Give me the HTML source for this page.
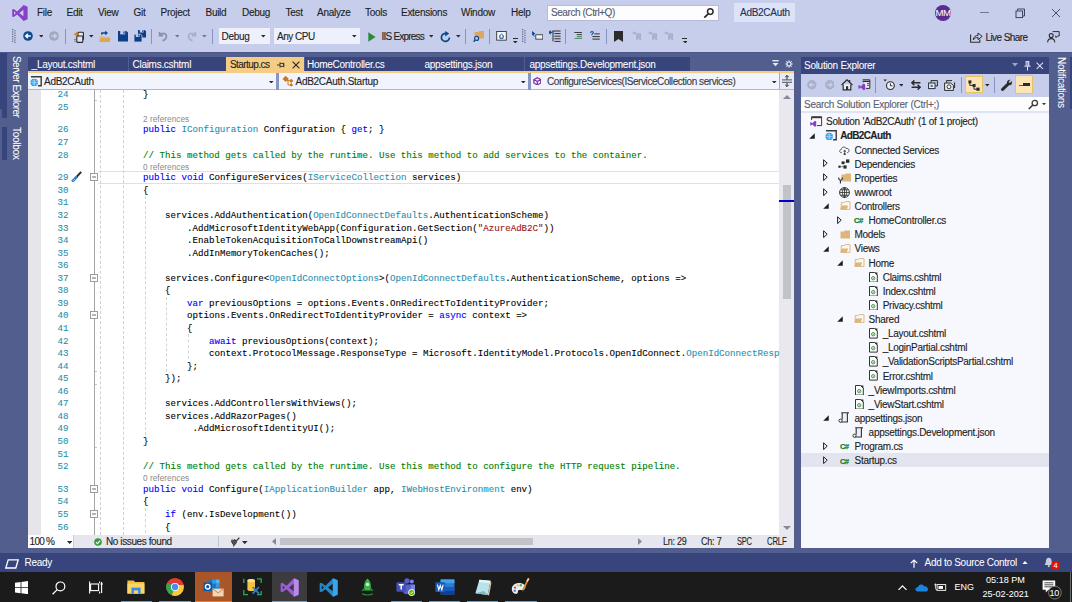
<!DOCTYPE html>
<html><head><meta charset="utf-8"><title>AdB2CAuth - Microsoft Visual Studio</title>
<style>
html,body{margin:0;padding:0;background:#525e8e;}
#root{position:relative;width:1072px;height:602px;overflow:hidden;background:#525e8e;font-family:"Liberation Sans",sans-serif;font-size:9.42px;color:#1e1e1e;}
#root div,#root span,#root svg{position:absolute;}
#root span{white-space:pre;line-height:12px;-webkit-text-stroke:0.12px currentColor;}
#root .m{font-family:"Liberation Mono",monospace;font-size:9.157px;-webkit-text-stroke:0.1px currentColor;}
.k{color:#0000ff}.t{color:#2b91af}.c{color:#008000}.s{color:#a31515}
#root span span{position:static;}
</style></head><body><div id="root">

<div style="left:0px;top:0px;width:1072px;height:51.5px;background:#c6ceeb;"></div>
<svg style="left:11px;top:4px" width="18" height="18" viewBox="0 0 18 18"><path d="M1.2 5.6 L2.6 4.9 L6.2 7.6 L12.6 1 L16.6 2.7 V15.3 L12.6 17 L6.2 10.4 L2.6 13.1 L1.2 12.4 Z M3 7.2 V10.8 L4.9 9 Z M12.4 5.8 L8.3 9 L12.4 12.2 Z" fill="#8a3fc8" fill-rule="evenodd"/></svg>
<span style="left:37px;top:7.20px;color:#1e1e1e;font-size:10.0px;letter-spacing:-0.280px;">File</span>
<span style="left:66.5px;top:7.20px;color:#1e1e1e;font-size:10.0px;letter-spacing:-0.280px;">Edit</span>
<span style="left:98px;top:7.20px;color:#1e1e1e;font-size:10.0px;letter-spacing:-0.280px;">View</span>
<span style="left:133.5px;top:7.20px;color:#1e1e1e;font-size:10.0px;letter-spacing:-0.280px;">Git</span>
<span style="left:160.5px;top:7.20px;color:#1e1e1e;font-size:10.0px;letter-spacing:-0.280px;">Project</span>
<span style="left:205.5px;top:7.20px;color:#1e1e1e;font-size:10.0px;letter-spacing:-0.280px;">Build</span>
<span style="left:242px;top:7.20px;color:#1e1e1e;font-size:10.0px;letter-spacing:-0.280px;">Debug</span>
<span style="left:285.5px;top:7.20px;color:#1e1e1e;font-size:10.0px;letter-spacing:-0.280px;">Test</span>
<span style="left:317px;top:7.20px;color:#1e1e1e;font-size:10.0px;letter-spacing:-0.280px;">Analyze</span>
<span style="left:365px;top:7.20px;color:#1e1e1e;font-size:10.0px;letter-spacing:-0.280px;">Tools</span>
<span style="left:401px;top:7.20px;color:#1e1e1e;font-size:10.0px;letter-spacing:-0.280px;">Extensions</span>
<span style="left:461px;top:7.20px;color:#1e1e1e;font-size:10.0px;letter-spacing:-0.280px;">Window</span>
<span style="left:511px;top:7.20px;color:#1e1e1e;font-size:10.0px;letter-spacing:-0.280px;">Help</span>
<div style="left:547.3px;top:4.6px;width:172px;height:16px;background:#fdfdff;border:1px solid #b4bcd8;box-sizing:border-box;"></div>
<span style="left:551px;top:7.40px;color:#555b70;font-size:10.0px;letter-spacing:-0.430px;">Search (Ctrl+Q)</span>
<svg style="left:703px;top:7px" width="12" height="12" viewBox="0 0 12 12"><circle cx="7.3" cy="4.6" r="2.8" fill="none" stroke="#2b2b2b" stroke-width="1.5"/><path d="M5.2 6.8 L1.3 10.7" stroke="#2b2b2b" stroke-width="1.8"/></svg>
<div style="left:734px;top:3px;width:61px;height:19px;background:#dde3f7;"></div>
<span style="left:740px;top:7.40px;color:#23305c;font-size:10.0px;letter-spacing:-0.280px;">AdB2CAuth</span>
<div style="left:935px;top:4.5px;width:16px;height:16px;border-radius:8px;background:#5c2d91;overflow:hidden"></div>
<span style="left:935.6px;top:7.00px;color:#ffffff;font-size:9.6px;letter-spacing:-0.700px;-webkit-text-stroke:0.03px #fff;">MM</span>
<div style="left:979.7px;top:12.3px;width:9px;height:1px;background:#6f7796;"></div>
<svg style="left:1015.3px;top:7.5px" width="11" height="11" viewBox="0 0 11 11"><path d="M2.5 2.5 V1 H9.5 V8 H8" fill="none" stroke="#3b4263" stroke-width="1"/><rect x="1" y="3" width="6.6" height="6.6" fill="none" stroke="#3b4263" stroke-width="1"/></svg>
<svg style="left:1051px;top:8px" width="10" height="10" viewBox="0 0 10 10"><path d="M1 1 L9 9 M9 1 L1 9" stroke="#4a5172" stroke-width="1"/></svg>
<svg style="left:12px;top:28.8px" width="4.6" height="14" viewBox="0 0 4.6 14"><rect x="0.0" y="0.00" width="1.3" height="1.2" fill="#5f6887"/><rect x="2.3" y="1.16" width="1.3" height="1.2" fill="#5f6887"/><rect x="0.0" y="2.32" width="1.3" height="1.2" fill="#5f6887"/><rect x="2.3" y="3.48" width="1.3" height="1.2" fill="#5f6887"/><rect x="0.0" y="4.64" width="1.3" height="1.2" fill="#5f6887"/><rect x="2.3" y="5.80" width="1.3" height="1.2" fill="#5f6887"/><rect x="0.0" y="6.96" width="1.3" height="1.2" fill="#5f6887"/><rect x="2.3" y="8.12" width="1.3" height="1.2" fill="#5f6887"/><rect x="0.0" y="9.28" width="1.3" height="1.2" fill="#5f6887"/><rect x="2.3" y="10.44" width="1.3" height="1.2" fill="#5f6887"/><rect x="0.0" y="11.60" width="1.3" height="1.2" fill="#5f6887"/><rect x="2.3" y="12.76" width="1.3" height="1.2" fill="#5f6887"/></svg>
<svg style="left:22.5px;top:31.299999999999997px" width="10" height="10" viewBox="0 0 10 10"><circle cx="5" cy="5" r="4.8" fill="#0b4a8f"/><path d="M7.8 5 H3 M4.9 2.9 L2.7 5 L4.9 7.1" stroke="#fff" stroke-width="1.5" fill="none"/></svg>
<svg style="left:38.6px;top:35.3px" width="4.6" height="2.60" viewBox="0 0 4.6 2.6"><path d="M0 0 H4.6 L2.3 2.6 Z" fill="#2b2b2b"/></svg>
<svg style="left:49.3px;top:31.299999999999997px" width="10" height="10" viewBox="0 0 10 10"><circle cx="5" cy="5" r="4.8" fill="#a3a8bd"/><path d="M2.2 5 H7 M5.1 2.9 L7.3 5 L5.1 7.1" stroke="#c6ceeb" stroke-width="1.5" fill="none"/></svg>
<div style="left:65px;top:28.5px;width:1px;height:15.5px;background:#8593c2;"></div>
<svg style="left:72.5px;top:30.5px" width="12" height="12" viewBox="0 0 12 12"><rect x="5" y="1.2" width="5.4" height="7.6" rx="0.8" fill="#e6e8f6" stroke="#2b2b2b" stroke-width="1.1"/><rect x="3.8" y="5" width="6" height="6.4" rx="0.6" fill="#dfe2f3" stroke="#2b2b2b" stroke-width="1.1"/><path d="M2 8 V11" stroke="#2b2b2b" stroke-width="0.9" stroke-dasharray="1 0.7"/><path d="M3.2 0.2 L4 2.4 L6.2 3.2 L4 4 L3.2 6.2 L2.4 4 L0.2 3.2 L2.4 2.4 Z" fill="#d4801f"/></svg>
<svg style="left:89.3px;top:35.3px" width="4.6" height="2.60" viewBox="0 0 4.6 2.6"><path d="M0 0 H4.6 L2.3 2.6 Z" fill="#2b2b2b"/></svg>
<svg style="left:99px;top:30.5px" width="12" height="12" viewBox="0 0 12 12"><path d="M0.5 5.2 H4.3 L5.2 6.1 H10.6 V11 H0.5 Z" fill="#e7b566"/><path d="M1.3 7.2 H11.6 L10.4 11 H0.5 Z" fill="#dfa650"/><path d="M2.8 3.8 V2 H7.6 M6.2 0.4 L8 2 L6.2 3.6" fill="none" stroke="#0b4a8f" stroke-width="1.3"/></svg>
<svg style="left:117.6px;top:31px" width="10" height="10.5" viewBox="0 0 10 10.5"><path d="M0 0 H8.2 L10 1.6 V10.5 H0 Z" fill="#0b3f86"/><rect x="2.2" y="0" width="5" height="3.4" fill="#c6ceeb"/><rect x="5.4" y="0.5" width="1.2" height="2.2" fill="#0b3f86"/></svg>
<svg style="left:134px;top:30px" width="12" height="12" viewBox="0 0 12 12"><path d="M4 0 H10.6 L12 1.3 V7.6 H4 Z" fill="#0b3f86"/><rect x="5.8" y="0" width="3.8" height="2.5" fill="#c6ceeb"/><rect x="8.2" y="0.4" width="0.9" height="1.6" fill="#0b3f86"/><path d="M0 4.2 H6.6 L8 5.5 V12 H0 Z" fill="#0b3f86" stroke="#c6ceeb" stroke-width="0.8"/><rect x="1.8" y="4.4" width="3.8" height="2.5" fill="#c6ceeb"/><rect x="4.2" y="4.8" width="0.9" height="1.6" fill="#0b3f86"/></svg>
<div style="left:151px;top:28.5px;width:1px;height:15.5px;background:#8593c2;"></div>
<svg style="left:158px;top:30.5px" width="11" height="11" viewBox="0 0 11 11"><path d="M1.6 1 V4.6 H5.2 M1.8 4.4 C3.4 1.8 7 1.6 8.2 4 C9.2 6.2 7.6 8.6 4.6 9.8" fill="none" stroke="#8a91ae" stroke-width="1.7"/></svg>
<svg style="left:174.7px;top:35.3px" width="4.6" height="2.60" viewBox="0 0 4.6 2.6"><path d="M0 0 H4.6 L2.3 2.6 Z" fill="#6e7593"/></svg>
<svg style="left:185.5px;top:30.5px" width="11" height="11" viewBox="0 0 11 11"><path d="M9.4 1 V4.6 H5.8 M9.2 4.4 C7.6 1.8 4 1.6 2.8 4 C1.8 6.2 3.4 8.6 6.4 9.8" fill="none" stroke="#a9afc9" stroke-width="1.7"/></svg>
<svg style="left:202px;top:35.3px" width="4.6" height="2.60" viewBox="0 0 4.6 2.6"><path d="M0 0 H4.6 L2.3 2.6 Z" fill="#6e7593"/></svg>
<div style="left:212px;top:28.5px;width:1px;height:15.5px;background:#8593c2;"></div>
<div style="left:218.5px;top:28px;width:51px;height:16px;background:#eef1fc;"></div>
<span style="left:221.5px;top:30.70px;color:#1e1e1e;font-size:10.0px;letter-spacing:-0.280px;">Debug</span>
<svg style="left:261.2px;top:35.3px" width="4.6" height="2.60" viewBox="0 0 4.6 2.6"><path d="M0 0 H4.6 L2.3 2.6 Z" fill="#2b2b2b"/></svg>
<div style="left:274px;top:28px;width:86px;height:16px;background:#eef1fc;"></div>
<span style="left:277px;top:30.70px;color:#1e1e1e;font-size:10.0px;letter-spacing:-0.480px;">Any CPU</span>
<svg style="left:352.3px;top:35.3px" width="4.6" height="2.60" viewBox="0 0 4.6 2.6"><path d="M0 0 H4.6 L2.3 2.6 Z" fill="#2b2b2b"/></svg>
<svg style="left:368px;top:31.5px" width="8" height="10" viewBox="0 0 8 10"><path d="M0.3 0.3 L7.6 5 L0.3 9.7 Z" fill="#2e8a36"/></svg>
<span style="left:381.5px;top:30.70px;color:#1e1e1e;font-size:10.0px;letter-spacing:-0.780px;">IIS Express</span>
<svg style="left:428.5px;top:35.3px" width="4.6" height="2.60" viewBox="0 0 4.6 2.6"><path d="M0 0 H4.6 L2.3 2.6 Z" fill="#2b2b2b"/></svg>
<svg style="left:439.5px;top:30.5px" width="11" height="12" viewBox="0 0 11 12"><path d="M6.6 2.6 A4 4 0 1 0 9.4 6.4" fill="none" stroke="#0b4a8f" stroke-width="1.7"/><path d="M5.2 0 L9.2 2.6 L5.2 5.4 Z" fill="#0b4a8f"/></svg>
<svg style="left:456px;top:35.3px" width="4.6" height="2.60" viewBox="0 0 4.6 2.6"><path d="M0 0 H4.6 L2.3 2.6 Z" fill="#2b2b2b"/></svg>
<div style="left:464.7px;top:28.5px;width:1px;height:15.5px;background:#8593c2;"></div>
<svg style="left:472.5px;top:30px" width="13" height="12" viewBox="0 0 13 12"><path d="M1.6 2 H5.6 L6.4 1 H11 V8.6 H1.6 Z" fill="#dba864"/><circle cx="3.6" cy="8.4" r="2" fill="#c6ceeb" stroke="#0b4a8f" stroke-width="1.2"/><path d="M2.2 10 L0.6 11.8" stroke="#0b4a8f" stroke-width="1.4"/></svg>
<div style="left:488.7px;top:28.5px;width:1px;height:15.5px;background:#8593c2;"></div>
<svg style="left:496px;top:31.2px" width="11" height="9.6" viewBox="0 0 12 11"><rect x="0.5" y="0.5" width="11" height="10" fill="#f4f6fd" stroke="#2f2f2f" stroke-width="1"/><path d="M3.2 6.2 L6 3.6 L8.8 6.2 M4.2 5.8 V8.4 H7.8 V5.8" fill="none" stroke="#0b4a8f" stroke-width="1.1"/></svg>
<div style="left:513px;top:38px;width:5px;height:1.2px;background:#2b2b2b;"></div>
<svg style="left:513.2px;top:40.599999999999994px" width="4.6" height="2.60" viewBox="0 0 4.6 2.6"><path d="M0 0 H4.6 L2.3 2.6 Z" fill="#2b2b2b"/></svg>
<svg style="left:521.8px;top:28.8px" width="4.6" height="14" viewBox="0 0 4.6 14"><rect x="0.0" y="0.00" width="1.3" height="1.2" fill="#5f6887"/><rect x="2.3" y="1.16" width="1.3" height="1.2" fill="#5f6887"/><rect x="0.0" y="2.32" width="1.3" height="1.2" fill="#5f6887"/><rect x="2.3" y="3.48" width="1.3" height="1.2" fill="#5f6887"/><rect x="0.0" y="4.64" width="1.3" height="1.2" fill="#5f6887"/><rect x="2.3" y="5.80" width="1.3" height="1.2" fill="#5f6887"/><rect x="0.0" y="6.96" width="1.3" height="1.2" fill="#5f6887"/><rect x="2.3" y="8.12" width="1.3" height="1.2" fill="#5f6887"/><rect x="0.0" y="9.28" width="1.3" height="1.2" fill="#5f6887"/><rect x="2.3" y="10.44" width="1.3" height="1.2" fill="#5f6887"/><rect x="0.0" y="11.60" width="1.3" height="1.2" fill="#5f6887"/><rect x="2.3" y="12.76" width="1.3" height="1.2" fill="#5f6887"/></svg>
<svg style="left:531.5px;top:30.5px" width="11.5" height="10.6" viewBox="0 0 14 13"><path d="M0 0 L4.2 3.4 L2.2 4 L3.4 6.4 L2.4 6.9 L1.2 4.6 L0 5.8 Z" fill="#0b4a8f"/><rect x="4.6" y="4.6" width="8.6" height="5.4" fill="#eef1fc" stroke="#2f2f2f" stroke-width="1"/></svg>
<svg style="left:549px;top:30px" width="13" height="12" viewBox="0 0 13 12"><path d="M0 2.4 H3.4 M1.8 0.6 L0 2.4 L1.8 4.2" fill="none" stroke="#0b4a8f" stroke-width="1.1"/><path d="M3.4 1 H11.6 M5.4 3.6 H11.6 M5.4 6.2 H11.6 M5.4 8.8 H11.6 M5.4 11.4 H11.6 M4 1 V11.4" fill="none" stroke="#2f2f2f" stroke-width="1"/></svg>
<div style="left:565px;top:28.5px;width:1px;height:15.5px;background:#8593c2;"></div>
<svg style="left:573.6px;top:32px" width="8.8" height="7.4" viewBox="0 0 10 9"><path d="M0 0.6 H9.6 M3 3.2 H9.6" stroke="#2f2f2f" stroke-width="1.1"/><path d="M3 5.8 H9.6 M0 8.2 H9.6" stroke="#2e7d32" stroke-width="1.1"/></svg>
<svg style="left:589.6px;top:31px" width="10.4" height="9" viewBox="0 0 11 10"><path d="M0.4 2.2 C0.6 0.2 3.4 0.2 3.4 1.8 C3.4 3 1.6 3 1.8 4.6" fill="none" stroke="#0b4a8f" stroke-width="1.2"/><path d="M4.6 3.2 H10.6 M2.4 6.2 H10.6 M2.4 9 H10.6" stroke="#2f2f2f" stroke-width="1.1"/></svg>
<div style="left:606px;top:28.5px;width:1px;height:15.5px;background:#8593c2;"></div>
<svg style="left:613.5px;top:30.5px" width="9" height="11" viewBox="0 0 9 11"><path d="M0 0 H9 V11 L4.5 8 L0 11 Z" fill="#2b2b2b"/></svg>
<svg style="left:632px;top:30.8px" width="10" height="10" viewBox="0 0 11 11"><path d="M4.5 2.6 H10 V10.6 L7.2 8.6 L4.5 10.6 Z" fill="#aab1cd"/><path d="M0.4 2.2 H4 M2.4 0.6 L4 2.2 L2.4 3.8" fill="none" stroke="#9aa2c0" stroke-width="1"/></svg>
<svg style="left:648px;top:30.8px" width="10" height="10" viewBox="0 0 11 11"><path d="M4.5 2.6 H10 V10.6 L7.2 8.6 L4.5 10.6 Z" fill="#aab1cd"/><path d="M0.4 2.2 H4 M2.4 0.6 L4 2.2 L2.4 3.8" fill="none" stroke="#9aa2c0" stroke-width="1"/></svg>
<svg style="left:664.4px;top:30.8px" width="10" height="10" viewBox="0 0 11 11"><path d="M4.5 2.6 H10 V10.6 L7.2 8.6 L4.5 10.6 Z" fill="#aab1cd"/><path d="M0.4 2.2 H4 M2.4 0.6 L4 2.2 L2.4 3.8" fill="none" stroke="#9aa2c0" stroke-width="1"/></svg>
<div style="left:682.4px;top:38px;width:5px;height:1.2px;background:#2b2b2b;"></div>
<svg style="left:682.6px;top:40.599999999999994px" width="4.6" height="2.60" viewBox="0 0 4.6 2.6"><path d="M0 0 H4.6 L2.3 2.6 Z" fill="#2b2b2b"/></svg>
<svg style="left:970px;top:31px" width="13" height="12" viewBox="0 0 13 12"><path d="M0.6 3.6 V11.2 H9.8 V8.4" fill="none" stroke="#2f2f2f" stroke-width="1.1"/><path d="M3.2 9 C3.6 5.6 5.6 4.4 8 4.4 V2 L12.2 5.4 L8 8.6 V6.4 C6 6.4 4.6 7 3.2 9 Z" fill="#c6ceeb" stroke="#2f2f2f" stroke-width="1"/></svg>
<span style="left:985.5px;top:32.10px;color:#1e1e1e;font-size:10.0px;letter-spacing:-0.580px;">Live Share</span>
<svg style="left:1047px;top:30.5px" width="13" height="12" viewBox="0 0 13 12"><path d="M5.6 0.6 H12.2 V5 H10.4 L9 6.6 V5 H8.2" fill="none" stroke="#2f2f2f" stroke-width="1"/><circle cx="4.2" cy="4.6" r="2" fill="none" stroke="#2f2f2f" stroke-width="1.1"/><path d="M0.6 11.4 C0.8 8.2 2.4 7.6 4.2 7.6 C6 7.6 7.6 8.2 7.8 11.4" fill="none" stroke="#2f2f2f" stroke-width="1.1"/></svg>
<div style="left:0px;top:51.5px;width:1072px;height:1.2px;background:#4a5788;"></div>
<div style="left:0px;top:52.6px;width:6.7px;height:65.4px;background:#38457d;"></div>
<div style="left:0px;top:109px;width:2.1px;height:9.2px;background:#525e8e;"></div>
<div style="left:2.1px;top:127px;width:4.6px;height:33px;background:#38457d;"></div>
<span style="left:21.6px;top:56.4px;color:#fff;font-size:10.0px;letter-spacing:-0.55px;transform-origin:0 0;transform:rotate(90deg);-webkit-text-stroke:0.05px #fff;">Server Explorer</span>
<span style="left:21.6px;top:127.4px;color:#fff;font-size:10.0px;letter-spacing:-0.28px;transform-origin:0 0;transform:rotate(90deg);-webkit-text-stroke:0.05px #fff;">Toolbox</span>
<div style="left:27.5px;top:57px;width:100.5px;height:14.2px;background:#38457d;"></div>
<span style="left:31.6px;top:58.60px;color:#ffffff;font-size:10.0px;letter-spacing:-0.280px;-webkit-text-stroke:0.05px #fff;">_Layout.cshtml</span>
<div style="left:128.5px;top:57px;width:99px;height:14.2px;background:#38457d;"></div>
<span style="left:132.5px;top:58.60px;color:#ffffff;font-size:10.0px;letter-spacing:-0.280px;-webkit-text-stroke:0.05px #fff;">Claims.cshtml</span>
<div style="left:304.5px;top:57px;width:115px;height:14.2px;background:#38457d;"></div>
<span style="left:307px;top:58.60px;color:#ffffff;font-size:10.0px;letter-spacing:-0.280px;-webkit-text-stroke:0.05px #fff;">HomeController.cs</span>
<div style="left:420px;top:57px;width:104px;height:14.2px;background:#38457d;"></div>
<span style="left:424.5px;top:58.60px;color:#ffffff;font-size:10.0px;letter-spacing:-0.280px;-webkit-text-stroke:0.05px #fff;">appsettings.json</span>
<div style="left:524.5px;top:57px;width:165.5px;height:14.2px;background:#38457d;"></div>
<span style="left:529.5px;top:58.60px;color:#ffffff;font-size:10.0px;letter-spacing:-0.280px;-webkit-text-stroke:0.05px #fff;">appsettings.Development.json</span>
<div style="left:226.2px;top:56.5px;width:77.6px;height:15.5px;background:#f5cc84;"></div>
<span style="left:229.9px;top:58.70px;color:#1e1e1e;font-size:10.0px;letter-spacing:-0.540px;">Startup.cs</span>
<svg style="left:277px;top:61px" width="8" height="8" viewBox="0 0 8 8"><path d="M0 4 H3 M3 1.4 V6.6 M3 2.4 H6.6 V5.4 H3 M6.8 1.8 V6.2" fill="none" stroke="#3a3a3a" stroke-width="1"/></svg>
<svg style="left:291.5px;top:60.5px" width="8" height="8" viewBox="0 0 8 8"><path d="M0.6 0.6 L7.4 7.4 M7.4 0.6 L0.6 7.4" stroke="#2b2b2b" stroke-width="1.2"/></svg>
<svg style="left:772px;top:60.2px" width="7.4" height="7.4" viewBox="0 0 8 8"><path d="M0.4 0.8 H7.2" stroke="#e9ecf8" stroke-width="1.5"/><path d="M0.6 3.2 H7 L3.8 6.8 Z" fill="#e9ecf8"/></svg>
<svg style="left:785.4px;top:59.8px" width="8" height="8" viewBox="0 0 9 9"><circle cx="4.5" cy="4.5" r="2.3" fill="none" stroke="#e9ecf8" stroke-width="1.4"/><path d="M4.5 0.3 V1.6 M4.5 7.4 V8.7 M0.3 4.5 H1.6 M7.4 4.5 H8.7 M1.5 1.5 L2.4 2.4 M6.6 6.6 L7.5 7.5 M7.5 1.5 L6.6 2.4 M2.4 6.6 L1.5 7.5" stroke="#e9ecf8" stroke-width="1.1"/></svg>
<div style="left:27.5px;top:71.1px;width:766.5px;height:1.9px;background:#f5cc84;"></div>
<div style="left:27.5px;top:72.9px;width:766.5px;height:16.3px;background:#f1f4fd;"></div>
<div style="left:27.5px;top:89.1px;width:766.5px;height:0.9px;background:#a9b6de;"></div>
<div style="left:276px;top:73px;width:2.8px;height:16.6px;background:#8796c3;"></div>
<div style="left:528.1px;top:73px;width:2.7px;height:16.6px;background:#8796c3;"></div>
<div style="left:779.8px;top:73px;width:14.2px;height:16.1px;background:#e6ebfa;"></div>
<div style="left:779.2px;top:73px;width:0.9px;height:16.1px;background:#9aa9d6;"></div>
<svg style="left:29.8px;top:75.8px" width="12" height="11" viewBox="0 0 12 11"><path d="M1 0.8 H11.2 V9.8 H8" fill="none" stroke="#3a3a3a" stroke-width="1.4"/><circle cx="4.2" cy="6.4" r="3.7" fill="#1c97ea"/><path d="M0.6 6.4 H7.8 M4.2 2.8 V10 M1.6 4.4 C3 5.2 5.4 5.2 6.8 4.4 M1.6 8.4 C3 7.6 5.4 7.6 6.8 8.4" fill="none" stroke="#d9eefc" stroke-width="0.6"/></svg>
<span style="left:44px;top:76.40px;color:#1e1e1e;font-size:10.0px;letter-spacing:-0.280px;">AdB2CAuth</span>
<svg style="left:269.2px;top:80.89999999999999px" width="4.6" height="2.60" viewBox="0 0 4.6 2.6"><path d="M0 0 H4.6 L2.3 2.6 Z" fill="#2b2b2b"/></svg>
<svg style="left:281.5px;top:74.5px" width="12" height="12" viewBox="0 0 12 12"><path d="M3.7 0.7 L6.9 3.9 L3.7 7.1 L0.5 3.9 Z" fill="#c87a20"/><path d="M9.2 3.7 L11.3 5.8 L9.2 7.9 L7.1 5.8 Z" fill="#c87a20"/><path d="M9.2 8 L11.1 9.9 L9.2 11.8 L7.3 9.9 Z" fill="#c87a20"/><path d="M5 5.4 H7.4 M6 5.4 V9.9 H7.6" fill="none" stroke="#c87a20" stroke-width="1"/></svg>
<span style="left:295.5px;top:76.40px;color:#1e1e1e;font-size:10.0px;letter-spacing:-0.280px;">AdB2CAuth.Startup</span>
<svg style="left:521px;top:80.89999999999999px" width="4.6" height="2.60" viewBox="0 0 4.6 2.6"><path d="M0 0 H4.6 L2.3 2.6 Z" fill="#2b2b2b"/></svg>
<svg style="left:532.9px;top:76.6px" width="8.6" height="8.6" viewBox="0 0 10 10"><path d="M5 0.8 L9 3 V7 L5 9.2 L1 7 V3 Z M1 3 L5 5.2 L9 3 M5 5.2 V9.2" fill="none" stroke="#7b2fa0" stroke-width="1.4"/></svg>
<span style="left:547px;top:76.40px;color:#3a3a3a;font-size:10.0px;letter-spacing:-0.425px;">ConfigureServices(IServiceCollection services)</span>
<svg style="left:772.2px;top:80.89999999999999px" width="4.6" height="2.60" viewBox="0 0 4.6 2.6"><path d="M0 0 H4.6 L2.3 2.6 Z" fill="#2b2b2b"/></svg>
<svg style="left:781.5px;top:75px" width="10" height="12" viewBox="0 0 10 12"><path d="M0 4.9 H10 M0 7.3 H10" stroke="#2b2b2b" stroke-width="0.8"/><path d="M5 0.6 V4.6 M5 7.6 V11.4 M3.2 2.2 L5 0.4 L6.8 2.2 M3.2 9.8 L5 11.6 L6.8 9.8" fill="none" stroke="#2b2b2b" stroke-width="1"/></svg>
<div style="left:27.5px;top:90px;width:752px;height:445px;background:#ffffff;"></div>
<div style="left:27.5px;top:90px;width:13.7px;height:445px;background:#e6e6ea;"></div>
<div style="left:779.3px;top:90px;width:14.7px;height:445px;background:#e8e8ee;"></div>
<div style="left:782.6px;top:185px;width:8.5px;height:113.5px;background:#c2c3c9;"></div>
<div style="left:779.3px;top:200px;width:14.7px;height:2px;background:#0000cd;"></div>
<svg style="left:782.8px;top:95px" width="8" height="4" viewBox="0 0 8 4"><path d="M0 4 L4 0 L8 4 Z" fill="#868999"/></svg>
<svg style="left:782.8px;top:526px" width="8" height="4" viewBox="0 0 8 4"><path d="M0 0 L4 4 L8 0 Z" fill="#868999"/></svg>
<div style="left:97.5px;top:170.785px;width:681.8px;height:12.857000000000001px;background:transparent;border-top:1.3px solid #dedfe8;border-bottom:1.3px solid #dedfe8;box-sizing:border-box;"></div>
<div style="left:94.4px;top:90px;width:1px;height:445px;background:#a5a5a5;"></div>
<div style="left:100.1px;top:90px;width:0;height:445px;border-left:1px dashed #d0d0d0;"></div>
<div style="left:122.7px;top:90px;width:0;height:445px;border-left:1px dashed #d0d0d0;"></div>
<div style="left:144.5px;top:196.0px;width:0;height:238.6px;border-left:1px dashed #d4d4d4;"></div>
<div style="left:166.4px;top:296.5px;width:0;height:75.3px;border-left:1px dashed #d4d4d4;"></div>
<div style="left:188.4px;top:334.1px;width:0;height:25.1px;border-left:1px dashed #d4d4d4;"></div>
<div style="left:144.5px;top:507.6px;width:0;height:25.1px;border-left:1px dashed #d4d4d4;"></div>
<svg style="left:90.4px;top:173.3px" width="8" height="8" viewBox="0 0 8 8"><rect x="0.5" y="0.5" width="7" height="7" fill="#fff" stroke="#9c9c9c" stroke-width="1"/><path d="M2 4 H6" stroke="#6a6a6a" stroke-width="1"/></svg>
<svg style="left:90.4px;top:273.7px" width="8" height="8" viewBox="0 0 8 8"><rect x="0.5" y="0.5" width="7" height="7" fill="#fff" stroke="#9c9c9c" stroke-width="1"/><path d="M2 4 H6" stroke="#6a6a6a" stroke-width="1"/></svg>
<svg style="left:90.4px;top:311.4px" width="8" height="8" viewBox="0 0 8 8"><rect x="0.5" y="0.5" width="7" height="7" fill="#fff" stroke="#9c9c9c" stroke-width="1"/><path d="M2 4 H6" stroke="#6a6a6a" stroke-width="1"/></svg>
<svg style="left:90.4px;top:484.9px" width="8" height="8" viewBox="0 0 8 8"><rect x="0.5" y="0.5" width="7" height="7" fill="#fff" stroke="#9c9c9c" stroke-width="1"/><path d="M2 4 H6" stroke="#6a6a6a" stroke-width="1"/></svg>
<svg style="left:90.4px;top:510.0px" width="8" height="8" viewBox="0 0 8 8"><rect x="0.5" y="0.5" width="7" height="7" fill="#fff" stroke="#9c9c9c" stroke-width="1"/><path d="M2 4 H6" stroke="#6a6a6a" stroke-width="1"/></svg>
<div style="left:95.4px;top:99.7785px;width:2px;height:1px;background:#c4c4c4;"></div>
<div style="left:95.4px;top:371.31850000000026px;width:2px;height:1px;background:#c4c4c4;"></div>
<div style="left:95.4px;top:383.8755000000003px;width:2px;height:1px;background:#c4c4c4;"></div>
<div style="left:95.4px;top:446.66050000000035px;width:2px;height:1px;background:#c4c4c4;"></div>
<svg style="left:70.5px;top:171.2px" width="11" height="12" viewBox="0 0 11 12"><path d="M10.2 0.8 L5.4 6.2" stroke="#2b2b2b" stroke-width="2"/><path d="M5.2 4.6 L7 6.4 L3.2 10.6 C2 11.8 -0.2 10.6 0.6 9 Z" fill="#2f7fc4"/><path d="M2.4 7.4 L4 9 M1.4 8.6 L2.8 10" stroke="#cfe3f5" stroke-width="0.6"/></svg>
<span class="m t" style="left:48px;width:20.5px;text-align:right;top:89.10px">24</span>
<span class="m t" style="left:48px;width:20.5px;text-align:right;top:101.66px">25</span>
<span class="m t" style="left:48px;width:20.5px;text-align:right;top:124.41px">26</span>
<span class="m t" style="left:48px;width:20.5px;text-align:right;top:136.97px">27</span>
<span class="m t" style="left:48px;width:20.5px;text-align:right;top:149.53px">28</span>
<span class="m t" style="left:48px;width:20.5px;text-align:right;top:172.28px">29</span>
<span class="m t" style="left:48px;width:20.5px;text-align:right;top:184.84px">30</span>
<span class="m t" style="left:48px;width:20.5px;text-align:right;top:197.40px">31</span>
<span class="m t" style="left:48px;width:20.5px;text-align:right;top:209.96px">32</span>
<span class="m t" style="left:48px;width:20.5px;text-align:right;top:222.51px">33</span>
<span class="m t" style="left:48px;width:20.5px;text-align:right;top:235.07px">34</span>
<span class="m t" style="left:48px;width:20.5px;text-align:right;top:247.63px">35</span>
<span class="m t" style="left:48px;width:20.5px;text-align:right;top:260.18px">36</span>
<span class="m t" style="left:48px;width:20.5px;text-align:right;top:272.74px">37</span>
<span class="m t" style="left:48px;width:20.5px;text-align:right;top:285.30px">38</span>
<span class="m t" style="left:48px;width:20.5px;text-align:right;top:297.86px">39</span>
<span class="m t" style="left:48px;width:20.5px;text-align:right;top:310.41px">40</span>
<span class="m t" style="left:48px;width:20.5px;text-align:right;top:322.97px">41</span>
<span class="m t" style="left:48px;width:20.5px;text-align:right;top:335.53px">42</span>
<span class="m t" style="left:48px;width:20.5px;text-align:right;top:348.08px">43</span>
<span class="m t" style="left:48px;width:20.5px;text-align:right;top:360.64px">44</span>
<span class="m t" style="left:48px;width:20.5px;text-align:right;top:373.20px">45</span>
<span class="m t" style="left:48px;width:20.5px;text-align:right;top:385.75px">46</span>
<span class="m t" style="left:48px;width:20.5px;text-align:right;top:398.31px">47</span>
<span class="m t" style="left:48px;width:20.5px;text-align:right;top:410.87px">48</span>
<span class="m t" style="left:48px;width:20.5px;text-align:right;top:423.43px">49</span>
<span class="m t" style="left:48px;width:20.5px;text-align:right;top:435.98px">50</span>
<span class="m t" style="left:48px;width:20.5px;text-align:right;top:448.54px">51</span>
<span class="m t" style="left:48px;width:20.5px;text-align:right;top:461.10px">52</span>
<span class="m t" style="left:48px;width:20.5px;text-align:right;top:483.85px">53</span>
<span class="m t" style="left:48px;width:20.5px;text-align:right;top:496.41px">54</span>
<span class="m t" style="left:48px;width:20.5px;text-align:right;top:508.97px">55</span>
<span class="m t" style="left:48px;width:20.5px;text-align:right;top:521.52px">56</span>
<span class="m" style="left:143.05px;top:89.10px;color:#000">}</span>
<span style="left:143.05px;top:112.74px;color:#8a8a8a;font-size:8.3px;-webkit-text-stroke:0">2 references</span>
<span class="m" style="left:143.05px;top:124.41px;color:#000"><span class="k">public</span> <span class="t">IConfiguration</span> Configuration { <span class="k">get</span>; }</span>
<span class="m" style="left:143.05px;top:149.53px;color:#000"><span class="c">// This method gets called by the runtime. Use this method to add services to the container.</span></span>
<span style="left:143.05px;top:160.61px;color:#8a8a8a;font-size:8.3px;-webkit-text-stroke:0">0 references</span>
<span class="m" style="left:143.05px;top:172.28px;color:#000"><span class="k">public</span> <span class="k">void</span> ConfigureServices(<span class="t">IServiceCollection</span> services)</span>
<span class="m" style="left:143.05px;top:184.84px;color:#000">{</span>
<span class="m" style="left:165.03px;top:209.96px;color:#000">services.AddAuthentication(<span class="t">OpenIdConnectDefaults</span>.AuthenticationScheme)</span>
<span class="m" style="left:187.00px;top:222.51px;color:#000">.AddMicrosoftIdentityWebApp(Configuration.GetSection(<span class="s">"AzureAdB2C"</span>))</span>
<span class="m" style="left:187.00px;top:235.07px;color:#000">.EnableTokenAcquisitionToCallDownstreamApi()</span>
<span class="m" style="left:187.00px;top:247.63px;color:#000">.AddInMemoryTokenCaches();</span>
<span class="m" style="left:165.03px;top:272.74px;color:#000">services.Configure&lt;<span class="t">OpenIdConnectOptions</span>&gt;(<span class="t">OpenIdConnectDefaults</span>.AuthenticationScheme, options =&gt;</span>
<span class="m" style="left:165.03px;top:285.30px;color:#000">{</span>
<span class="m" style="left:187.00px;top:297.86px;color:#000"><span class="k">var</span> previousOptions = options.Events.OnRedirectToIdentityProvider;</span>
<span class="m" style="left:187.00px;top:310.41px;color:#000">options.Events.OnRedirectToIdentityProvider = <span class="k">async</span> context =&gt;</span>
<span class="m" style="left:187.00px;top:322.97px;color:#000">{</span>
<span class="m" style="left:208.98px;top:335.53px;color:#000"><span class="k">await</span> previousOptions(context);</span>
<span class="m" style="left:208.98px;top:348.08px;color:#000">context.ProtocolMessage.ResponseType = Microsoft.IdentityModel.Protocols.OpenIdConnect.<span class="t">OpenIdConnectResp</span></span>
<span class="m" style="left:187.00px;top:360.64px;color:#000">};</span>
<span class="m" style="left:165.03px;top:373.20px;color:#000">});</span>
<span class="m" style="left:165.03px;top:398.31px;color:#000">services.AddControllersWithViews();</span>
<span class="m" style="left:165.03px;top:410.87px;color:#000">services.AddRazorPages()</span>
<span class="m" style="left:192.50px;top:423.43px;color:#000">.AddMicrosoftIdentityUI();</span>
<span class="m" style="left:143.05px;top:435.98px;color:#000">}</span>
<span class="m" style="left:143.05px;top:461.10px;color:#000"><span class="c">// This method gets called by the runtime. Use this method to configure the HTTP request pipeline.</span></span>
<span style="left:143.05px;top:472.17px;color:#8a8a8a;font-size:8.3px;-webkit-text-stroke:0">0 references</span>
<span class="m" style="left:143.05px;top:483.85px;color:#000"><span class="k">public</span> <span class="k">void</span> Configure(<span class="t">IApplicationBuilder</span> app, <span class="t">IWebHostEnvironment</span> env)</span>
<span class="m" style="left:143.05px;top:496.41px;color:#000">{</span>
<span class="m" style="left:165.03px;top:508.97px;color:#000"><span class="k">if</span> (env.IsDevelopment())</span>
<span class="m" style="left:165.03px;top:521.52px;color:#000">{</span>
<div style="left:27.5px;top:535px;width:766.5px;height:13px;background:#e6e7ee;"></div>
<div style="left:27.5px;top:535px;width:46.5px;height:13px;background:#fbfcff;border-right:1px solid #c8cbdc;box-sizing:border-box;"></div>
<span style="left:29.6px;top:536.00px;color:#1e1e1e;font-size:10.0px;letter-spacing:-0.780px;">100 %</span>
<svg style="left:66.6px;top:540.8px" width="5.4" height="3.05" viewBox="0 0 4.6 2.6"><path d="M0 0 H4.6 L2.3 2.6 Z" fill="#2b2b2b"/></svg>
<svg style="left:93.8px;top:538.0px" width="8" height="8" viewBox="0 0 8 8"><circle cx="4" cy="4" r="3.8" fill="#2f9e3c"/><path d="M2 4.1 L3.5 5.6 L6.1 2.7" fill="none" stroke="#fff" stroke-width="1.1"/></svg>
<span style="left:106px;top:536.00px;color:#1e1e1e;font-size:10.0px;letter-spacing:-0.400px;">No issues found</span>
<div style="left:217.5px;top:536px;width:1px;height:11px;background:#c3c6d6;"></div>
<svg style="left:230px;top:536.6px" width="10" height="10" viewBox="0 0 10 10"><path d="M9.4 0.6 L5.4 5" stroke="#3a3a3a" stroke-width="1.2"/><path d="M1.4 4.4 L5 2.6 L6.4 5.6 L4 8.6 Z" fill="#555" stroke="#333" stroke-width="1"/><path d="M1 3.6 L2.6 2.2 M3 8.8 L4 9.6" stroke="#3a3a3a" stroke-width="0.9"/></svg>
<svg style="left:242.2px;top:540.8px" width="5.6" height="3.17" viewBox="0 0 4.6 2.6"><path d="M0 0 H4.6 L2.3 2.6 Z" fill="#2b2b2b"/></svg>
<svg style="left:271.5px;top:538.2px" width="4" height="7" viewBox="0 0 4 7"><path d="M4 0 V7 L0 3.5 Z" fill="#868999"/></svg>
<div style="left:279.5px;top:538px;width:253px;height:7px;background:#c2c3c9;"></div>
<svg style="left:637.5px;top:538.2px" width="4" height="7" viewBox="0 0 4 7"><path d="M0 0 V7 L4 3.5 Z" fill="#868999"/></svg>
<span style="left:663.2px;top:536.00px;color:#1e1e1e;font-size:10.0px;letter-spacing:-0.280px;transform:scaleX(0.9);transform-origin:0 0;">Ln: 29</span>
<span style="left:700.8px;top:536.00px;color:#1e1e1e;font-size:10.0px;letter-spacing:-0.280px;transform:scaleX(0.91);transform-origin:0 0;">Ch: 7</span>
<span style="left:736.6px;top:536.00px;color:#1e1e1e;font-size:10.0px;letter-spacing:-0.280px;transform:scaleX(0.75);transform-origin:0 0;">SPC</span>
<span style="left:766.8px;top:536.00px;color:#1e1e1e;font-size:10.0px;letter-spacing:-0.280px;transform:scaleX(0.78);transform-origin:0 0;">CRLF</span>
<div style="left:800.5px;top:57px;width:248.6px;height:17px;background:#38457d;"></div>
<span style="left:804px;top:60.40px;color:#ffffff;font-size:10.0px;letter-spacing:-0.280px;-webkit-text-stroke:0.05px #fff;">Solution Explorer</span>
<svg style="left:1012px;top:63.3px" width="6" height="4" viewBox="0 0 6 4"><path d="M0 0 H6 L3 3.6 Z" fill="#9aa5cf"/></svg>
<svg style="left:1024.4px;top:60.6px" width="7" height="10" viewBox="0 0 7 10"><path d="M1.6 0.6 H5.2 M2.2 0.6 V5 M4.8 0.6 V5 M4 0.6 V5 M0.4 5.2 H6.6 M3.5 5.2 V9.6" fill="none" stroke="#dfe4f6" stroke-width="1"/></svg>
<svg style="left:1036.4px;top:61.6px" width="7.6" height="7.6" viewBox="0 0 8 8"><path d="M0.6 0.6 L7.4 7.4 M7.4 0.6 L0.6 7.4" stroke="#dfe4f6" stroke-width="1.1"/></svg>
<div style="left:800.5px;top:74px;width:248.6px;height:22.8px;background:#c6ceeb;"></div>
<svg style="left:807.4px;top:80.2px" width="9.6" height="9.6" viewBox="0 0 9 9"><circle cx="4.5" cy="4.5" r="4.4" fill="#aab0c6"/><path d="M7 4.5 H2.6 M4.4 2.6 L2.4 4.5 L4.4 6.4" stroke="#c6ceeb" stroke-width="1.3" fill="none"/></svg>
<svg style="left:824.6px;top:80.2px" width="9.6" height="9.6" viewBox="0 0 9 9"><circle cx="4.5" cy="4.5" r="4.4" fill="#aab0c6"/><path d="M2 4.5 H6.4 M4.6 2.6 L6.6 4.5 L4.6 6.4" stroke="#c6ceeb" stroke-width="1.3" fill="none"/></svg>
<svg style="left:840.5px;top:79px" width="12" height="11.5" viewBox="0 0 12 11.5"><path d="M0.6 6 L6 0.8 L11.4 6 M8.6 1 V3.2" fill="none" stroke="#2b2b2b" stroke-width="1.2"/><path d="M2.2 5.4 V10.8 H9.8 V5.4" fill="#f0f2fb" stroke="#2b2b2b" stroke-width="1.2"/><rect x="5" y="7.2" width="2.2" height="3.6" fill="#2b2b2b"/></svg>
<svg style="left:858px;top:79px" width="13" height="12" viewBox="0 0 13 12"><path d="M4.6 0.8 H11.8 V9.4 H8" fill="#eef1fc" stroke="#2b2b2b" stroke-width="1"/><path d="M4.6 2.4 H11.8" stroke="#2b2b2b" stroke-width="1.4"/><path d="M9 4.6 H11 M9 6.4 H11" stroke="#2b2b2b" stroke-width="0.8"/><path d="M0.4 6.4 L1.2 6 L2.8 7.4 L5.6 4.6 L7.2 5.2 V10.6 L5.6 11.2 L2.8 8.6 L1.2 9.8 L0.4 9.4 Z" fill="#8a3fc8"/></svg>
<div style="left:874.6px;top:77px;width:1px;height:16px;background:#8593c2;"></div>
<svg style="left:883px;top:79px" width="13" height="12" viewBox="0 0 13 12"><path d="M0.4 0.6 H3.8 L2.1 2.6 Z" fill="#2b2b2b"/><circle cx="7.4" cy="6.6" r="3.9" fill="#eef1fc" stroke="#2b2b2b" stroke-width="1.1"/><path d="M7.4 4.4 V6.8 H9.4" fill="none" stroke="#2b2b2b" stroke-width="1"/></svg>
<svg style="left:898.8px;top:84.1px" width="4.6" height="2.60" viewBox="0 0 4.6 2.6"><path d="M0 0 H4.6 L2.3 2.6 Z" fill="#2b2b2b"/></svg>
<svg style="left:910.5px;top:80px" width="10" height="10" viewBox="0 0 10 10"><path d="M9.4 2.8 H1 M3.4 0.4 L0.8 2.8 L3.4 5.2 M0.6 7.2 H9 M6.6 4.8 L9.2 7.2 L6.6 9.6" fill="none" stroke="#2b2b2b" stroke-width="1.5"/></svg>
<svg style="left:927.5px;top:80px" width="10" height="10" viewBox="0 0 10 10"><path d="M3 2.6 V0.6 H9.4 V6 H7.4" fill="none" stroke="#2b2b2b" stroke-width="1"/><rect x="0.6" y="3" width="6.4" height="5.6" fill="#eef1fc" stroke="#2b2b2b" stroke-width="1"/><rect x="2.6" y="4.8" width="2.2" height="2.2" fill="#2f7fc4"/></svg>
<svg style="left:943.5px;top:79.5px" width="12" height="11" viewBox="0 0 12 11"><path d="M2.6 2.6 V0.6 H8" fill="none" stroke="#2b2b2b" stroke-width="1"/><path d="M0.6 3 H6.6 L9.4 5.4 V10.4 H0.6 Z" fill="#eef1fc" stroke="#2b2b2b" stroke-width="1"/><circle cx="5" cy="6.8" r="2" fill="none" stroke="#2b2b2b" stroke-width="0.9"/><path d="M10.6 2.4 V8" stroke="#2b2b2b" stroke-width="1"/></svg>
<div style="left:960.5px;top:77px;width:1px;height:16px;background:#8593c2;"></div>
<div style="left:965px;top:76.2px;width:17.6px;height:17.2px;background:#fce4b4;border:1px solid #e5c365;box-sizing:border-box;"></div>
<svg style="left:968px;top:79.5px" width="12" height="11" viewBox="0 0 12 11"><rect x="0.4" y="0.4" width="3" height="3" fill="#2b2b2b"/><rect x="4.6" y="4" width="3" height="3" fill="#2b2b2b"/><rect x="8.4" y="7.6" width="3.2" height="3.2" fill="#2b2b2b"/><path d="M1.8 3 V5.4 H5 M6 6.6 V9.2 H9" fill="none" stroke="#2b2b2b" stroke-width="1"/></svg>
<svg style="left:985px;top:84.1px" width="4.6" height="2.60" viewBox="0 0 4.6 2.6"><path d="M0 0 H4.6 L2.3 2.6 Z" fill="#2b2b2b"/></svg>
<div style="left:994px;top:77px;width:1px;height:16px;background:#8593c2;"></div>
<svg style="left:1001px;top:79px" width="12" height="12" viewBox="0 0 12 12"><path d="M1.6 10.4 L6.8 5.4" stroke="#2b2b2b" stroke-width="2.9" stroke-linecap="round"/><path d="M10.8 2 L8.8 4 L7.6 2.8 L9.6 0.8 C7.6 0.2 5.6 1.8 6 4 C6.4 6.2 9 6.8 10.4 5.4 C11 4.6 11.2 3.2 10.8 2 Z" fill="#2b2b2b"/></svg>
<div style="left:1015.2px;top:75.4px;width:17.7px;height:18.4px;background:#fce4b4;border:1px solid #e5c365;box-sizing:border-box;"></div>
<div style="left:1018.5px;top:85.2px;width:5px;height:1px;background:#5a5a7a;"></div>
<div style="left:1022.5px;top:83.4px;width:7px;height:2.6px;background:#2b2b2b;"></div>
<div style="left:800.5px;top:96.8px;width:248.6px;height:14.4px;background:#fdfdff;"></div>
<span style="left:804px;top:99.20px;color:#5b5f70;font-size:10.0px;letter-spacing:-0.280px;">Search Solution Explorer (Ctrl+;)</span>
<svg style="left:1027.5px;top:98.5px" width="11" height="11" viewBox="0 0 11 11"><circle cx="6.8" cy="4" r="2.7" fill="none" stroke="#3a3a3a" stroke-width="1.3"/><path d="M4.8 6 L0.8 10" stroke="#3a3a3a" stroke-width="1.6"/></svg>
<svg style="left:1042px;top:103.2px" width="4" height="2.26" viewBox="0 0 4.6 2.6"><path d="M0 0 H4.6 L2.3 2.6 Z" fill="#3a3a3a"/></svg>
<div style="left:800.5px;top:111.2px;width:248.6px;height:437px;background:#f7f8fd;"></div>
<div style="left:800.5px;top:111.2px;width:248.6px;height:1.6px;background:#dfe4f4;"></div>
<div style="left:800.5px;top:453.08450000000005px;width:248.6px;height:14.127px;background:#e2e5f0;"></div>
<svg style="left:809.5px;top:115.7px" width="13" height="11" viewBox="0 0 13 11"><path d="M1.6 4 V0.8 H11.6 V9.6 H7" fill="none" stroke="#3a3a3a" stroke-width="1"/><path d="M1.6 1.4 H11.6" stroke="#3a3a3a" stroke-width="1.6"/><path d="M0.2 6.4 L0.9 6 L2.4 7.2 L4.8 4.8 L6.2 5.4 V10.2 L4.8 10.8 L2.4 8.4 L0.9 9.6 L0.2 9.2 Z" fill="#8a3fc8"/></svg>
<span style="left:826px;top:116.30px;color:#1e1e1e;font-size:10.0px;letter-spacing:-0.280px;">Solution 'AdB2CAuth' (1 of 1 project)</span>
<svg style="left:808.8px;top:132.6px" width="6" height="6" viewBox="0 0 5.4 5.4"><path d="M5.2 0.2 V5.2 H0.2 Z" fill="#1e1e1e"/></svg>
<svg style="left:824.5px;top:130.0px" width="12" height="11" viewBox="0 0 12 11"><path d="M1 0.8 H11.2 V9.8 H8" fill="none" stroke="#3a3a3a" stroke-width="1.4"/><circle cx="4.2" cy="6.4" r="3.7" fill="#1c97ea"/><path d="M0.6 6.4 H7.8 M4.2 2.8 V10 M1.6 4.4 C3 5.2 5.4 5.2 6.8 4.4 M1.6 8.4 C3 7.6 5.4 7.6 6.8 8.4" fill="none" stroke="#d9eefc" stroke-width="0.6"/></svg>
<span style="left:840.2px;top:130.43px;color:#1e1e1e;font-size:10.0px;letter-spacing:-0.630px;font-weight:bold;">AdB2CAuth</span>
<svg style="left:839.1999999999999px;top:145.6px" width="11.4" height="9.6" viewBox="0 0 12 10"><path d="M3.2 7 H2.6 C0.2 7 0 4 2.4 3.6 C2.6 1 6.4 0 7.6 2.6 C10.4 1.8 11.6 5.4 9.6 6.6 L8.6 7" fill="none" stroke="#3a3a3a" stroke-width="0.9"/><path d="M6 4 V7.6 M4.6 5.4 H7.4" stroke="#3a3a3a" stroke-width="0.9"/><rect x="5" y="7.4" width="2" height="2.2" fill="#3a3a3a"/></svg>
<span style="left:854.5px;top:144.55px;color:#1e1e1e;font-size:10.0px;letter-spacing:-0.280px;">Connected Services</span>
<svg style="left:823.1999999999999px;top:159.3px" width="5" height="8.4" viewBox="0 0 5 8.4"><path d="M0.6 0.8 L4.2 4.2 L0.6 7.6 Z" fill="#f5f7fe" stroke="#1e1e1e" stroke-width="1"/></svg>
<svg style="left:838.4px;top:158.5px" width="12" height="10" viewBox="0 0 12 10"><rect x="8" y="0.4" width="3.4" height="3.4" fill="#2b2b2b"/><rect x="3.6" y="2.4" width="2.8" height="2.8" fill="#2b2b2b"/><rect x="5.4" y="6.4" width="3.2" height="3.2" fill="#2b2b2b"/><rect x="0.4" y="6.6" width="2.2" height="2.2" fill="#2b2b2b"/><path d="M6.4 3.4 H8 M2.6 7.6 H5.4" stroke="#2b2b2b" stroke-width="0.8" stroke-dasharray="1 0.6"/></svg>
<span style="left:854.5px;top:158.68px;color:#1e1e1e;font-size:10.0px;letter-spacing:-0.280px;">Dependencies</span>
<svg style="left:823.1999999999999px;top:173.4px" width="5" height="8.4" viewBox="0 0 5 8.4"><path d="M0.6 0.8 L4.2 4.2 L0.6 7.6 Z" fill="#f5f7fe" stroke="#1e1e1e" stroke-width="1"/></svg>
<svg style="left:841.0px;top:173.0px" width="11" height="9" viewBox="0 0 11 9"><path d="M0.5 1.6 H4 L4.8 0.6 H10 V8.6 H0.5 Z" fill="#dcb67a"/></svg>
<svg style="left:837.9px;top:176.6px" width="6" height="7" viewBox="0 0 6 7"><path d="M1 0.6 C0.4 1.8 1 3 2.4 3.2 V6.6 M4 0.6 C4.6 1.8 4 3 2.6 3.2" fill="none" stroke="#2b2b2b" stroke-width="1.1"/></svg>
<span style="left:854.5px;top:172.81px;color:#1e1e1e;font-size:10.0px;letter-spacing:-0.280px;">Properties</span>
<svg style="left:823.1999999999999px;top:187.5px" width="5" height="8.4" viewBox="0 0 5 8.4"><path d="M0.6 0.8 L4.2 4.2 L0.6 7.6 Z" fill="#f5f7fe" stroke="#1e1e1e" stroke-width="1"/></svg>
<svg style="left:839.1px;top:186.9px" width="11" height="11" viewBox="0 0 11 11"><circle cx="5.5" cy="5.5" r="4.9" fill="none" stroke="#2b2b2b" stroke-width="1"/><path d="M0.6 5.5 H10.4 M5.5 0.6 V10.4 M1.6 2.8 H9.4 M1.6 8.2 H9.4 M5.5 0.6 C2.6 3 2.6 8 5.5 10.4 M5.5 0.6 C8.4 3 8.4 8 5.5 10.4" fill="none" stroke="#2b2b2b" stroke-width="0.8"/></svg>
<span style="left:854.5px;top:186.94px;color:#1e1e1e;font-size:10.0px;letter-spacing:-0.280px;">wwwroot</span>
<svg style="left:822.9px;top:203.3px" width="6" height="6" viewBox="0 0 5.4 5.4"><path d="M5.2 0.2 V5.2 H0.2 Z" fill="#1e1e1e"/></svg>
<svg style="left:839.8px;top:201.3px" width="11" height="9" viewBox="0 0 11 9"><path d="M1.2 1.6 H4.2 L5 0.6 H10 V8.4 H1.2 Z" fill="#fbf8f0" stroke="#d9b27a" stroke-width="0.9"/><path d="M0 8.6 L1.8 4.4 H8.2 L6.6 8.6 Z" fill="#dcb67a"/></svg>
<span style="left:854.5px;top:201.06px;color:#1e1e1e;font-size:10.0px;letter-spacing:-0.280px;">Controllers</span>
<svg style="left:837.3px;top:215.8px" width="5" height="8.4" viewBox="0 0 5 8.4"><path d="M0.6 0.8 L4.2 4.2 L0.6 7.6 Z" fill="#f5f7fe" stroke="#1e1e1e" stroke-width="1"/></svg>
<span style="left:854.1px;top:215.4px;color:#237f28;font-weight:bold;font-size:7.7px;letter-spacing:-0.7px;-webkit-text-stroke:0.25px #237f28">C#</span>
<span style="left:868.6px;top:215.19px;color:#1e1e1e;font-size:10.0px;letter-spacing:-0.280px;">HomeController.cs</span>
<svg style="left:823.1999999999999px;top:229.9px" width="5" height="8.4" viewBox="0 0 5 8.4"><path d="M0.6 0.8 L4.2 4.2 L0.6 7.6 Z" fill="#f5f7fe" stroke="#1e1e1e" stroke-width="1"/></svg>
<svg style="left:840.0px;top:229.5px" width="11" height="9" viewBox="0 0 11 9"><path d="M0.5 1.6 H4 L4.8 0.6 H10 V8.6 H0.5 Z" fill="#dcb67a"/></svg>
<span style="left:854.5px;top:229.32px;color:#1e1e1e;font-size:10.0px;letter-spacing:-0.280px;">Models</span>
<svg style="left:822.9px;top:245.6px" width="6" height="6" viewBox="0 0 5.4 5.4"><path d="M5.2 0.2 V5.2 H0.2 Z" fill="#1e1e1e"/></svg>
<svg style="left:839.8px;top:243.6px" width="11" height="9" viewBox="0 0 11 9"><path d="M1.2 1.6 H4.2 L5 0.6 H10 V8.4 H1.2 Z" fill="#fbf8f0" stroke="#d9b27a" stroke-width="0.9"/><path d="M0 8.6 L1.8 4.4 H8.2 L6.6 8.6 Z" fill="#dcb67a"/></svg>
<span style="left:854.5px;top:243.44px;color:#1e1e1e;font-size:10.0px;letter-spacing:-0.280px;">Views</span>
<svg style="left:837.0px;top:259.8px" width="6" height="6" viewBox="0 0 5.4 5.4"><path d="M5.2 0.2 V5.2 H0.2 Z" fill="#1e1e1e"/></svg>
<svg style="left:853.9px;top:257.8px" width="11" height="9" viewBox="0 0 11 9"><path d="M1.2 1.6 H4.2 L5 0.6 H10 V8.4 H1.2 Z" fill="#fbf8f0" stroke="#d9b27a" stroke-width="0.9"/><path d="M0 8.6 L1.8 4.4 H8.2 L6.6 8.6 Z" fill="#dcb67a"/></svg>
<span style="left:868.6px;top:257.57px;color:#1e1e1e;font-size:10.0px;letter-spacing:-0.280px;">Home</span>
<svg style="left:869.0px;top:271.5px" width="9" height="10.6" viewBox="0 0 9 10.6"><path d="M0.5 0.5 H5.6 L8.3 3 V10.1 H0.5 Z" fill="#fff" stroke="#333" stroke-width="1"/><path d="M5.2 0.4 L8.4 3.4 V0.4 Z" fill="#333"/><circle cx="4.2" cy="6.2" r="1.7" fill="none" stroke="#2f8f3a" stroke-width="0.9"/><circle cx="4.2" cy="6.2" r="0.6" fill="#2f8f3a"/></svg>
<span style="left:882.7px;top:271.70px;color:#1e1e1e;font-size:10.0px;letter-spacing:-0.280px;">Claims.cshtml</span>
<svg style="left:869.0px;top:285.6px" width="9" height="10.6" viewBox="0 0 9 10.6"><path d="M0.5 0.5 H5.6 L8.3 3 V10.1 H0.5 Z" fill="#fff" stroke="#333" stroke-width="1"/><path d="M5.2 0.4 L8.4 3.4 V0.4 Z" fill="#333"/><circle cx="4.2" cy="6.2" r="1.7" fill="none" stroke="#2f8f3a" stroke-width="0.9"/><circle cx="4.2" cy="6.2" r="0.6" fill="#2f8f3a"/></svg>
<span style="left:882.7px;top:285.82px;color:#1e1e1e;font-size:10.0px;letter-spacing:-0.280px;">Index.cshtml</span>
<svg style="left:869.0px;top:299.8px" width="9" height="10.6" viewBox="0 0 9 10.6"><path d="M0.5 0.5 H5.6 L8.3 3 V10.1 H0.5 Z" fill="#fff" stroke="#333" stroke-width="1"/><path d="M5.2 0.4 L8.4 3.4 V0.4 Z" fill="#333"/><circle cx="4.2" cy="6.2" r="1.7" fill="none" stroke="#2f8f3a" stroke-width="0.9"/><circle cx="4.2" cy="6.2" r="0.6" fill="#2f8f3a"/></svg>
<span style="left:882.7px;top:299.95px;color:#1e1e1e;font-size:10.0px;letter-spacing:-0.280px;">Privacy.cshtml</span>
<svg style="left:837.0px;top:316.3px" width="6" height="6" viewBox="0 0 5.4 5.4"><path d="M5.2 0.2 V5.2 H0.2 Z" fill="#1e1e1e"/></svg>
<svg style="left:853.9px;top:314.3px" width="11" height="9" viewBox="0 0 11 9"><path d="M1.2 1.6 H4.2 L5 0.6 H10 V8.4 H1.2 Z" fill="#fbf8f0" stroke="#d9b27a" stroke-width="0.9"/><path d="M0 8.6 L1.8 4.4 H8.2 L6.6 8.6 Z" fill="#dcb67a"/></svg>
<span style="left:868.6px;top:314.08px;color:#1e1e1e;font-size:10.0px;letter-spacing:-0.280px;">Shared</span>
<svg style="left:869.0px;top:328.0px" width="9" height="10.6" viewBox="0 0 9 10.6"><path d="M0.5 0.5 H5.6 L8.3 3 V10.1 H0.5 Z" fill="#fff" stroke="#333" stroke-width="1"/><path d="M5.2 0.4 L8.4 3.4 V0.4 Z" fill="#333"/><circle cx="4.2" cy="6.2" r="1.7" fill="none" stroke="#2f8f3a" stroke-width="0.9"/><circle cx="4.2" cy="6.2" r="0.6" fill="#2f8f3a"/></svg>
<span style="left:882.7px;top:328.20px;color:#1e1e1e;font-size:10.0px;letter-spacing:-0.280px;">_Layout.cshtml</span>
<svg style="left:869.0px;top:342.1px" width="9" height="10.6" viewBox="0 0 9 10.6"><path d="M0.5 0.5 H5.6 L8.3 3 V10.1 H0.5 Z" fill="#fff" stroke="#333" stroke-width="1"/><path d="M5.2 0.4 L8.4 3.4 V0.4 Z" fill="#333"/><circle cx="4.2" cy="6.2" r="1.7" fill="none" stroke="#2f8f3a" stroke-width="0.9"/><circle cx="4.2" cy="6.2" r="0.6" fill="#2f8f3a"/></svg>
<span style="left:882.7px;top:342.33px;color:#1e1e1e;font-size:10.0px;letter-spacing:-0.280px;">_LoginPartial.cshtml</span>
<svg style="left:869.0px;top:356.3px" width="9" height="10.6" viewBox="0 0 9 10.6"><path d="M0.5 0.5 H5.6 L8.3 3 V10.1 H0.5 Z" fill="#fff" stroke="#333" stroke-width="1"/><path d="M5.2 0.4 L8.4 3.4 V0.4 Z" fill="#333"/><circle cx="4.2" cy="6.2" r="1.7" fill="none" stroke="#2f8f3a" stroke-width="0.9"/><circle cx="4.2" cy="6.2" r="0.6" fill="#2f8f3a"/></svg>
<span style="left:882.7px;top:356.46px;color:#1e1e1e;font-size:10.0px;letter-spacing:-0.280px;">_ValidationScriptsPartial.cshtml</span>
<svg style="left:869.0px;top:370.4px" width="9" height="10.6" viewBox="0 0 9 10.6"><path d="M0.5 0.5 H5.6 L8.3 3 V10.1 H0.5 Z" fill="#fff" stroke="#333" stroke-width="1"/><path d="M5.2 0.4 L8.4 3.4 V0.4 Z" fill="#333"/><circle cx="4.2" cy="6.2" r="1.7" fill="none" stroke="#2f8f3a" stroke-width="0.9"/><circle cx="4.2" cy="6.2" r="0.6" fill="#2f8f3a"/></svg>
<span style="left:882.7px;top:370.59px;color:#1e1e1e;font-size:10.0px;letter-spacing:-0.280px;">Error.cshtml</span>
<svg style="left:854.9px;top:384.5px" width="9" height="10.6" viewBox="0 0 9 10.6"><path d="M0.5 0.5 H5.6 L8.3 3 V10.1 H0.5 Z" fill="#fff" stroke="#333" stroke-width="1"/><path d="M5.2 0.4 L8.4 3.4 V0.4 Z" fill="#333"/><circle cx="4.2" cy="6.2" r="1.7" fill="none" stroke="#2f8f3a" stroke-width="0.9"/><circle cx="4.2" cy="6.2" r="0.6" fill="#2f8f3a"/></svg>
<span style="left:868.6px;top:384.71px;color:#1e1e1e;font-size:10.0px;letter-spacing:-0.280px;">_ViewImports.cshtml</span>
<svg style="left:854.9px;top:398.6px" width="9" height="10.6" viewBox="0 0 9 10.6"><path d="M0.5 0.5 H5.6 L8.3 3 V10.1 H0.5 Z" fill="#fff" stroke="#333" stroke-width="1"/><path d="M5.2 0.4 L8.4 3.4 V0.4 Z" fill="#333"/><circle cx="4.2" cy="6.2" r="1.7" fill="none" stroke="#2f8f3a" stroke-width="0.9"/><circle cx="4.2" cy="6.2" r="0.6" fill="#2f8f3a"/></svg>
<span style="left:868.6px;top:398.84px;color:#1e1e1e;font-size:10.0px;letter-spacing:-0.280px;">_ViewStart.cshtml</span>
<svg style="left:822.9px;top:415.2px" width="6" height="6" viewBox="0 0 5.4 5.4"><path d="M5.2 0.2 V5.2 H0.2 Z" fill="#1e1e1e"/></svg>
<svg style="left:837.9px;top:412.4px" width="11" height="11" viewBox="0 0 11 11"><path d="M3.2 0.7 H10.4 L9.4 1.6 V10 H2.6 M4.2 0.7 V7.6" fill="#eceefa" stroke="#333" stroke-width="1.1"/><circle cx="2.5" cy="8.7" r="1.6" fill="#f5f7fe" stroke="#333" stroke-width="1"/></svg>
<span style="left:854.5px;top:412.97px;color:#1e1e1e;font-size:10.0px;letter-spacing:-0.280px;">appsettings.json</span>
<svg style="left:852.0px;top:426.5px" width="11" height="11" viewBox="0 0 11 11"><path d="M3.2 0.7 H10.4 L9.4 1.6 V10 H2.6 M4.2 0.7 V7.6" fill="#eceefa" stroke="#333" stroke-width="1.1"/><circle cx="2.5" cy="8.7" r="1.6" fill="#f5f7fe" stroke="#333" stroke-width="1"/></svg>
<span style="left:868.6px;top:427.09px;color:#1e1e1e;font-size:10.0px;letter-spacing:-0.280px;">appsettings.Development.json</span>
<svg style="left:823.1999999999999px;top:441.8px" width="5" height="8.4" viewBox="0 0 5 8.4"><path d="M0.6 0.8 L4.2 4.2 L0.6 7.6 Z" fill="#f5f7fe" stroke="#1e1e1e" stroke-width="1"/></svg>
<span style="left:840.0px;top:441.4px;color:#237f28;font-weight:bold;font-size:7.7px;letter-spacing:-0.7px;-webkit-text-stroke:0.25px #237f28">C#</span>
<span style="left:854.5px;top:441.22px;color:#1e1e1e;font-size:10.0px;letter-spacing:-0.280px;">Program.cs</span>
<svg style="left:823.1999999999999px;top:455.9px" width="5" height="8.4" viewBox="0 0 5 8.4"><path d="M0.6 0.8 L4.2 4.2 L0.6 7.6 Z" fill="#f5f7fe" stroke="#1e1e1e" stroke-width="1"/></svg>
<span style="left:840.0px;top:455.5px;color:#237f28;font-weight:bold;font-size:7.7px;letter-spacing:-0.7px;-webkit-text-stroke:0.25px #237f28">C#</span>
<span style="left:854.5px;top:455.35px;color:#1e1e1e;font-size:10.0px;letter-spacing:-0.280px;">Startup.cs</span>
<div style="left:1070.3px;top:57px;width:1.7px;height:52px;background:#38457d;"></div>
<span style="left:1067px;top:56.8px;color:#fff;font-size:10.0px;letter-spacing:-0.28px;transform-origin:0 0;transform:rotate(90deg);-webkit-text-stroke:0.05px #fff;">Notifications</span>
<div style="left:0px;top:553.3px;width:1072px;height:18.4px;background:#38457d;"></div>
<svg style="left:4.5px;top:558.5px" width="14" height="10" viewBox="0 0 14 10"><path d="M3.2 0.8 H13.2 L10.8 9 H0.8 Z" fill="none" stroke="#ffffff" stroke-width="1.3"/></svg>
<span style="left:24.5px;top:557.30px;color:#ffffff;font-size:10.0px;letter-spacing:-0.280px;-webkit-text-stroke:0.03px #fff;">Ready</span>
<svg style="left:909.5px;top:558.5px" width="8" height="9" viewBox="0 0 8 9"><path d="M4 8.8 V1.2 M0.8 4.2 L4 1 L7.2 4.2" fill="none" stroke="#fff" stroke-width="1.2"/></svg>
<span style="left:924.5px;top:557.30px;color:#ffffff;font-size:10.0px;letter-spacing:-0.280px;-webkit-text-stroke:0.03px #fff;">Add to Source Control</span>
<svg style="left:1022px;top:561px" width="6" height="3.4" viewBox="0 0 6 3.4"><path d="M0 3.4 H6 L3 0 Z" fill="#fff"/></svg>
<svg style="left:1044.3px;top:557.2px" width="9.6" height="10.6" viewBox="0 0 9 10"><path d="M4.5 0.6 C2.4 0.6 1.8 2.4 1.8 4 C1.8 6 1 6.8 0.4 7.6 H8.6 C8 6.8 7.2 6 7.2 4 C7.2 2.4 6.6 0.6 4.5 0.6 Z" fill="#c9ccdc"/><circle cx="4.5" cy="8.6" r="1" fill="#c9ccdc"/></svg>
<div style="left:1051.2px;top:561px;width:8.6px;height:8.6px;border-radius:5px;background:#e51400"></div>
<span style="left:1053.6px;top:559.50px;color:#ffffff;font-size:7.4px;letter-spacing:0.000px;-webkit-text-stroke:0.03px #fff;">4</span>
<div style="left:0px;top:571.5px;width:1072px;height:30.5px;background:#1b1b1c;"></div>
<svg style="left:14.5px;top:580.6999999999999px" width="13.4" height="13.2" viewBox="0 0 13.4 13.2"><path d="M0 1.8 L5.6 1 V6.2 H0 Z M6.4 0.9 L13.4 0 V6.2 H6.4 Z M0 7 H5.6 V12.2 L0 11.4 Z M6.4 7 H13.4 V13.2 L6.4 12.3 Z" fill="#fff"/></svg>
<svg style="left:52px;top:580.9px" width="14" height="14" viewBox="0 0 14 14"><circle cx="8.4" cy="5.4" r="4.4" fill="none" stroke="#fff" stroke-width="1.2"/><path d="M5.2 8.6 L0.6 13.2" stroke="#fff" stroke-width="1.3"/></svg>
<svg style="left:89px;top:580.6999999999999px" width="14" height="13" viewBox="0 0 14 13"><rect x="1.6" y="3" width="8" height="6.6" fill="none" stroke="#fff" stroke-width="1.1"/><path d="M0.6 0.6 V12.4 M10.6 0.6 V2.2 M10.6 10.4 V12.4 M12.6 1 V12" stroke="#fff" stroke-width="1.1"/><circle cx="12.6" cy="3" r="1.1" fill="#fff"/></svg>
<svg style="left:127px;top:579.3px" width="18" height="16" viewBox="0 0 18 16"><path d="M0.4 1.4 H6.6 L8 3 H17.4 V14.6 H0.4 Z" fill="#f5c041"/><path d="M0.4 4.6 H17.4 V14.6 H0.4 Z" fill="#fbd768"/><rect x="4.4" y="8.6" width="9.2" height="6" fill="#3d8fe0"/><rect x="7" y="11.4" width="4" height="3.2" fill="#fbd768"/></svg>
<div style="left:121px;top:600.6px;width:31px;height:1.4px;background:#6a9cc6;"></div>
<svg style="left:166px;top:578.3px" width="18" height="18" viewBox="0 0 18 18"><circle cx="9" cy="9" r="8.8" fill="#e33b2e"/><path d="M9 9 L1.4 4.6 A8.8 8.8 0 0 0 5.8 17.2 Z" fill="#2da94f"/><path d="M9 9 L5.8 17.2 A8.8 8.8 0 0 0 17.6 7 H9 Z" fill="#fcc934"/><path d="M1.4 4.6 A8.8 8.8 0 0 1 17.6 7 H9 Z" fill="#e33b2e"/><circle cx="9" cy="9" r="4.1" fill="#fff"/><circle cx="9" cy="9" r="3.2" fill="#4a8cf5"/></svg>
<div style="left:159px;top:600.6px;width:31.5px;height:1.4px;background:#6a9cc6;"></div>
<div style="left:195px;top:571.5px;width:37px;height:30.5px;background:#a9562a;"></div>
<div style="left:195px;top:600.6px;width:37px;height:1.4px;background:#ee7b30;"></div>
<svg style="left:203px;top:578.8px" width="21" height="18" viewBox="0 0 21 18"><rect x="5.6" y="0.6" width="11" height="12" fill="#1a74c4"/><rect x="9" y="0.6" width="3.8" height="4" fill="#2f9be8"/><rect x="12.8" y="0.6" width="3.8" height="4" fill="#55b6f2"/><rect x="12.8" y="4.6" width="3.8" height="4" fill="#2f9be8"/><rect x="0.4" y="3.4" width="8.6" height="8.6" rx="1" fill="#0f5aa8"/><circle cx="4.7" cy="7.7" r="2.3" fill="none" stroke="#fff" stroke-width="1.3"/><rect x="9.6" y="9.6" width="11" height="7.8" fill="#f3d7b4"/><path d="M9.6 9.6 L15.1 14 L20.6 9.6" fill="none" stroke="#c98b4e" stroke-width="1"/></svg>
<svg style="left:243px;top:578.3px" width="19" height="18" viewBox="0 0 19 18"><path d="M4.4 2.6 C4.4 0.4 12 0.4 12 2.6 V11.4 C12 13.6 4.4 13.6 4.4 11.4 Z" fill="#f3c443"/><ellipse cx="8.2" cy="2.6" rx="3.8" ry="1.7" fill="#fbe08a"/><path d="M0.8 12 V16.6 H5 M14 0.8 H18.2 V5 M0.8 5 V0.8 M14 16.6 H18.2 V13" fill="none" stroke="#2da94f" stroke-width="1.3"/><path d="M9.6 9 L16 15.6 M16 9 L9.6 15.6" stroke="#2f7fd0" stroke-width="1.7"/></svg>
<div style="left:272px;top:571.5px;width:34.5px;height:30.5px;background:#3c3c3e;"></div>
<div style="left:272px;top:600.6px;width:34.5px;height:1.4px;background:#6a9cc6;"></div>
<svg style="left:279.4px;top:576.9px" width="21.5" height="21" viewBox="0 0 18 18"><path d="M1.2 5.6 L2.6 4.9 L6.2 7.6 L12.6 1 L16.6 2.7 V15.3 L12.6 17 L6.2 10.4 L2.6 13.1 L1.2 12.4 Z M3 7.2 V10.8 L4.9 9 Z M12.4 5.8 L8.3 9 L12.4 12.2 Z" fill="#9a5fd6" fill-rule="evenodd"/><path d="M12.6 1 L16.6 2.7 V15.3 L12.6 17 Z" fill="#b98be6"/></svg>
<svg style="left:318.4px;top:576.9px" width="21.5" height="21" viewBox="0 0 18 18"><path d="M1.2 5.6 L2.6 4.9 L6.2 7.6 L12.6 1 L16.6 2.7 V15.3 L12.6 17 L6.2 10.4 L2.6 13.1 L1.2 12.4 Z M3 7.2 V10.8 L4.9 9 Z M12.4 5.8 L8.3 9 L12.4 12.2 Z" fill="#2489ca" fill-rule="evenodd"/><path d="M12.6 1 L16.6 2.7 V15.3 L12.6 17 Z" fill="#37a6ee"/></svg>
<svg style="left:358.5px;top:578.3px" width="17" height="18" viewBox="0 0 17 18"><path d="M8.5 0.6 C12 3.6 12.6 8.6 11.2 12.6 H5.8 C4.4 8.6 5 3.6 8.5 0.6 Z" fill="#3bb54a"/><path d="M5.6 9 L2.4 13 L5.8 12.6 Z M11.4 9 L14.6 13 L11.2 12.6 Z" fill="#2a8f38"/><circle cx="8.5" cy="6.4" r="1.7" fill="#d7f5db"/><path d="M3 15.8 C6 17.4 11 17.4 14 15.8" fill="none" stroke="#2a8f38" stroke-width="1.2"/></svg>
<svg style="left:396px;top:578.3px" width="20" height="19" viewBox="0 0 20 19"><circle cx="15.8" cy="3.6" r="2" fill="#7b83eb"/><circle cx="11" cy="2.8" r="2.6" fill="#5a62c8"/><path d="M13.6 6.4 H19 V11.4 C19 14.6 14.8 14.6 14 12.4 Z" fill="#7b83eb"/><path d="M6.6 6.4 H15 V12.6 C15 17.6 6.6 17.6 6.6 12.6 Z" fill="#5a62c8"/><rect x="0.4" y="4.2" width="9.6" height="9.6" rx="1" fill="#464eb8"/><path d="M2.8 6.8 H7.6 M5.2 6.8 V11.6" stroke="#fff" stroke-width="1.4"/><circle cx="15.6" cy="14.6" r="3.4" fill="#fff"/><circle cx="15.6" cy="14.6" r="2.7" fill="#6bb700"/><path d="M14.2 14.6 L15.2 15.6 L17 13.6" fill="none" stroke="#fff" stroke-width="0.9"/></svg>
<div style="left:390.5px;top:600.6px;width:31.5px;height:1.4px;background:#6a9cc6;"></div>
<svg style="left:434.5px;top:579.3px" width="20" height="16" viewBox="0 0 20 16"><rect x="5.6" y="0.4" width="13.8" height="15.2" rx="0.8" fill="#2b7cd3"/><rect x="5.6" y="0.4" width="13.8" height="3.8" fill="#41a5ee"/><rect x="5.6" y="8" width="13.8" height="3.8" fill="#185abd"/><rect x="5.6" y="11.8" width="13.8" height="3.8" fill="#103f91"/><rect x="0.4" y="3.2" width="9.8" height="9.8" rx="0.8" fill="#185abd"/><path d="M2.4 5.6 L3.8 10.8 L5.3 6.4 L6.8 10.8 L8.2 5.6" fill="none" stroke="#fff" stroke-width="1.1"/></svg>
<div style="left:428.5px;top:600.6px;width:31.5px;height:1.4px;background:#6a9cc6;"></div>
<svg style="left:473.5px;top:578.8px" width="18" height="17" viewBox="0 0 18 17"><path d="M5.4 0.8 L16.6 1.8 L13.6 16 L1.4 14.2 Z" fill="#b9e3ea"/><path d="M5.4 0.8 L16.6 1.8 L16 4 L4.8 3 Z" fill="#e8f6f8"/><path d="M13.6 16 L16.6 1.8 L17.4 4 L15 16.4 Z" fill="#d9c8a6"/><path d="M1.4 14.2 L13.6 16 L10 12 Z" fill="#7fb9c4"/></svg>
<div style="left:467px;top:600.6px;width:31px;height:1.4px;background:#6a9cc6;"></div>
<svg style="left:511px;top:577.8px" width="19" height="19" viewBox="0 0 19 19"><path d="M7.6 5 C2.6 5 0.2 9 1 12.4 C1.8 15.6 5.4 16.8 6.6 15 C7.4 13.8 6.4 13 7.4 12.2 C8.8 11.2 13.6 13.6 14.4 9.6 C15 6.6 11.4 5 7.6 5 Z" fill="#e9eef5"/><circle cx="4" cy="9.6" r="1.2" fill="#e84c3d"/><circle cx="6.6" cy="7.4" r="1.2" fill="#f3c443"/><circle cx="9.8" cy="7.2" r="1.2" fill="#3bb54a"/><circle cx="3.8" cy="12.8" r="1.2" fill="#3d8fe0"/><path d="M17.6 0.6 L11.6 12.6" stroke="#d98a3a" stroke-width="1.7"/><path d="M11.8 12 L10.4 15.8 L12.8 12.6 Z" fill="#3a3a3a"/><path d="M17.8 0.4 L16 3.4" stroke="#f6d7a8" stroke-width="1.7"/></svg>
<div style="left:505px;top:600.6px;width:32px;height:1.4px;background:#6a9cc6;"></div>
<svg style="left:898px;top:584.6999999999999px" width="9" height="5.4" viewBox="0 0 9 5.4"><path d="M0.5 5 L4.5 0.8 L8.5 5" fill="none" stroke="#fff" stroke-width="1.1"/></svg>
<svg style="left:914.5px;top:583.0999999999999px" width="14" height="8.6" viewBox="0 0 14 8.6"><path d="M3 8.4 C-0.6 8.4 -0.2 4 2.8 4.2 C3.4 1.2 7.8 0.4 9 3.2 C12.4 2.6 14.4 6.6 11.8 8.4 Z" fill="#1b84e0"/></svg>
<svg style="left:934px;top:583.0999999999999px" width="12.6" height="8.4" viewBox="0 0 14 9"><rect x="3.4" y="1.6" width="9.6" height="6.4" fill="none" stroke="#fff" stroke-width="1"/><rect x="5" y="3.2" width="5" height="3.2" fill="#fff"/><path d="M1.6 0.4 V5 M0.4 1.8 H2.8 M1.6 5 C1.6 7 2.4 7.4 3.4 7.4" fill="none" stroke="#fff" stroke-width="0.9"/></svg>
<span style="left:954.5px;top:581.30px;color:#ffffff;font-size:9px;letter-spacing:0.000px;-webkit-text-stroke:0.03px #fff;">ENG</span>
<span style="left:986px;top:574.00px;color:#ffffff;font-size:9.1px;letter-spacing:0.000px;-webkit-text-stroke:0.03px #fff;">05:18 PM</span>
<span style="left:982.4px;top:588.20px;color:#ffffff;font-size:9.1px;letter-spacing:0.000px;-webkit-text-stroke:0.03px #fff;">25-02-2021</span>
<svg style="left:1041.5px;top:580.3px" width="21" height="20" viewBox="0 0 21 20"><path d="M0.6 0.6 H13.2 V9.8 H6.4 L3.8 12.4 V9.8 H0.6 Z" fill="#fff"/><path d="M2.4 2.8 H11.4 M2.4 4.8 H11.4 M2.4 6.8 H11.4" stroke="#1b1b1c" stroke-width="0.8"/><circle cx="12.9" cy="12.6" r="6.4" fill="#1b1b1c" stroke="#8c8c8c" stroke-width="0.8"/></svg>
<span style="left:1049.6px;top:587.20px;color:#ffffff;font-size:9px;letter-spacing:-0.300px;-webkit-text-stroke:0.03px #fff;">10</span>
<div style="left:1069.6px;top:571.5px;width:0.8px;height:30.5px;background:#6a6a6a;"></div>
</div></body></html>
